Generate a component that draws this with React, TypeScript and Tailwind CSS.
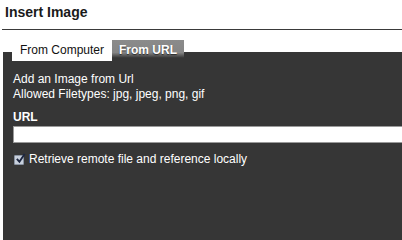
import React from "react";

export default function App() {
  return (
    <div className="min-h-screen flex flex-col bg-white font-['Liberation_Sans',Arial,sans-serif]">
      {/* Header */}
      <div className="pt-[4px] pl-[5px] text-[14px] leading-[17px] font-bold text-[#1a1a1a]">Insert Image</div>
      <div className="mt-[8px] ml-[2px] h-px bg-[#3a3a3a]" />

      {/* Tabs */}
      <div className="relative z-10 mt-[10px] flex pl-[12px] h-[21px] text-[12px] leading-[21px]">
        <div className="px-[8px] bg-white text-[#111]">From Computer</div>
        <div className="px-[7px] font-bold text-white [text-shadow:0_1px_1px_rgba(0,0,0,0.6)] bg-[linear-gradient(to_bottom,#8b8b8b_0%,#858585_60%,#363636_85%)]">
          From URL
        </div>
      </div>

      {/* Panel */}
      <div className="flex-1 -mt-[9px] ml-[3px] bg-[#363636] pl-[10px] pt-[20px] text-[12px] leading-[15px] text-white">
        <div>Add an Image from Url</div>
        <div>Allowed Filetypes: jpg, jpeg, png, gif</div>
        <div className="mt-[8px] font-bold">URL</div>
        <input
          type="text"
          className="mt-[1px] block w-full h-[17px] bg-white border border-r-0 border-[#9a9a9a] outline-none"
        />
        <label className="mt-[9px] flex items-center gap-[5px]">
          <span className="relative ml-[1px] w-[10px] h-[10px] rounded-[1px] bg-[#c8d0dc] border border-[#8a94a3]">
            <svg viewBox="0 0 12 12" className="absolute -top-[3px] left-[0px] w-[11px] h-[11px]">
              <path d="M2 6.5 L4.8 9.5 L10.5 1" fill="none" stroke="#1c2640" strokeWidth="2" />
            </svg>
          </span>
          <span>Retrieve remote file and reference locally</span>
        </label>
      </div>
    </div>
  );
}
